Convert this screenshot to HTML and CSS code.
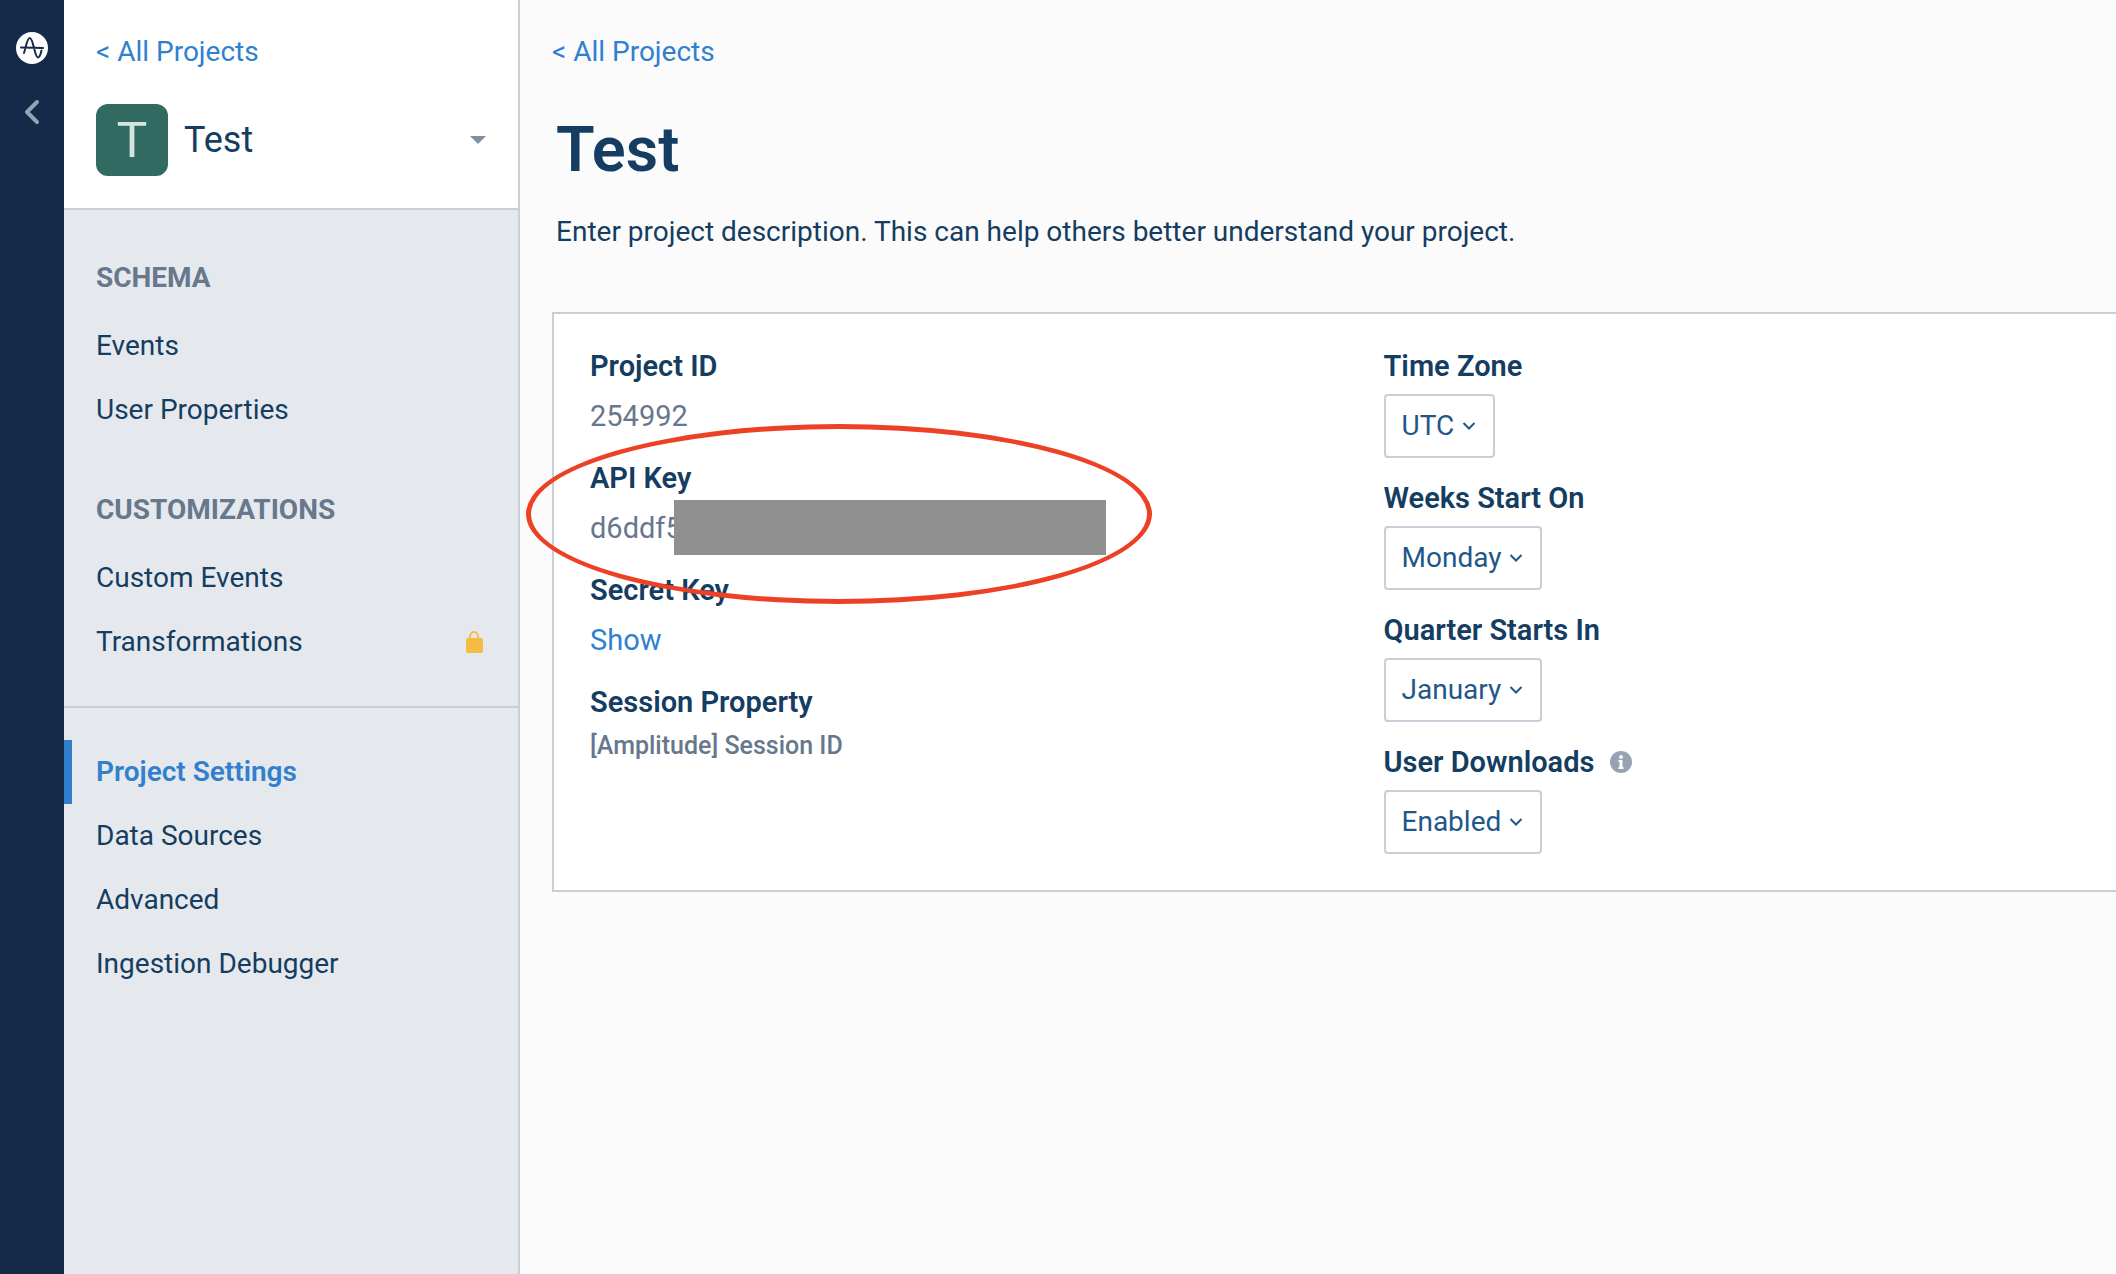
FILE: index.html
```html
<!DOCTYPE html>
<html lang="en">
<head>
<meta charset="utf-8">
<meta name="viewport" content="width=device-width, initial-scale=1">
<title>Test - Project Settings</title>
<link rel="stylesheet" href="styles.css">
</head>
<body>
<div class="app">
  <nav class="rail" aria-label="Global">
    <a class="rail-logo" href="#" aria-label="Home">
      <svg width="32" height="32" viewBox="0 0 32 32" fill="none">
        <circle cx="16" cy="16" r="16" fill="#fff"/>
        <path d="M5 15.500L27 16M8 21C9.500 17 11 6 13.700 6C17.500 6 18.500 25.500 22 25.500C24 25.500 24.500 22 25.500 18.500" stroke="#152a49" stroke-width="2" stroke-linecap="round"/>
      </svg>
    </a>
    <button class="rail-toggle" type="button" aria-label="Collapse menu">
      <svg width="16" height="26" viewBox="0 0 16 26" fill="none">
        <path d="M13 3L3 13L13 23" stroke="#97a3b4" stroke-width="4" stroke-linecap="round" stroke-linejoin="round"/>
      </svg>
    </button>
  </nav>

  <aside class="sidebar">
    <header class="sidebar-head">
      <a class="back-link" href="#">&lt; All Projects</a>
      <button class="project-switch" type="button">
        <span class="avatar">T</span>
        <span class="project-name">Test</span>
        <svg class="caret" width="16" height="8" viewBox="0 0 16 8"><path d="M0 0H16L8 8Z" fill="#7f90a3"/></svg>
      </button>
    </header>
    <nav class="menu" aria-label="Project">
      <section class="menu-group">
        <h2 class="menu-title">SCHEMA</h2>
        <a class="menu-item" href="#">Events</a>
        <a class="menu-item" href="#">User Properties</a>
      </section>
      <section class="menu-group">
        <h2 class="menu-title">CUSTOMIZATIONS</h2>
        <a class="menu-item" href="#">Custom Events</a>
        <a class="menu-item" href="#">Transformations
          <svg width="20" height="22" viewBox="0 0 20 22" fill="none">
            <rect x="0" y="7" width="17" height="15" rx="2" fill="#f6bc42"/>
            <path d="M4 8V5.500A4 4.500 0 0 1 12 5.500V8" stroke="#f6bc42" stroke-width="2"/>
          </svg>
        </a>
      </section>
      <section class="menu-group menu-group-settings">
        <a class="menu-item is-active" href="#" aria-current="page">Project Settings</a>
        <a class="menu-item" href="#">Data Sources</a>
        <a class="menu-item" href="#">Advanced</a>
        <a class="menu-item" href="#">Ingestion Debugger</a>
      </section>
    </nav>
  </aside>

  <main class="content">
    <a class="back-link" href="#">&lt; All Projects</a>
    <h1 class="title">Test</h1>
    <p class="description">Enter project description. This can help others better understand your project.</p>

    <section class="card">
      <dl class="details">
        <div class="detail">
          <dt class="label">Project ID</dt>
          <dd class="value">254992</dd>
        </div>
        <div class="detail">
          <dt class="label">API Key</dt>
          <dd class="value">d6ddf5</dd>
          <dd class="redaction"></dd>
          <dd class="callout"></dd>
        </div>
        <div class="detail">
          <dt class="label">Secret Key</dt>
          <dd class="value"><a class="show-link" href="#">Show</a></dd>
        </div>
        <div class="detail detail-compact">
          <dt class="label">Session Property</dt>
          <dd class="value">[Amplitude] Session ID</dd>
        </div>
      </dl>

      <form class="settings">
        <div class="setting">
          <label class="label" for="time-zone">Time Zone</label>
          <select class="select" id="time-zone"><option>UTC</option></select>
        </div>
        <div class="setting">
          <label class="label" for="week-start">Weeks Start On</label>
          <select class="select" id="week-start"><option>Monday</option></select>
        </div>
        <div class="setting">
          <label class="label" for="quarter-start">Quarter Starts In</label>
          <select class="select" id="quarter-start"><option>January</option></select>
        </div>
        <div class="setting">
          <div class="label-row">
            <label class="label" for="downloads">User Downloads</label>
            <svg width="22" height="22" viewBox="0 0 22 22" role="img" aria-label="Information">
              <circle cx="11" cy="11" r="11" fill="#97a3b4"/>
              <circle cx="11" cy="6" r="2" fill="#fff"/>
              <path d="M8.500 9H12.500V16H13.500V18H8.500V16H9.500V11H8.500Z" fill="#fff"/>
            </svg>
          </div>
          <select class="select" id="downloads"><option>Enabled</option></select>
        </div>
      </form>
    </section>
  </main>
</div>
</body>
</html>
```
FILE: styles.css
```css
* {
  box-sizing: border-box;
}

body {
  margin: 0;
  background: #fbfbfb;
  color: #143d61;
  font-family: Roboto, "Liberation Sans", sans-serif;
  font-size: 28px;
  line-height: 32px;
}

h1, h2, p, dl, dd {
  margin: 0;
}

a {
  color: inherit;
  text-decoration: none;
}

button, select {
  margin: 0;
  color: inherit;
  font: inherit;
}

svg {
  display: block;
  flex: none;
}

.app {
  display: flex;
  min-height: 100vh;
  overflow-x: hidden;
}

/* Global rail */
.rail {
  display: flex;
  flex: none;
  flex-direction: column;
  align-items: center;
  gap: 35px;
  width: 64px;
  padding-top: 32px;
  background: #152a49;
}

.rail-toggle {
  padding: 0;
  border: 0;
  background: none;
}

/* Project sidebar */
.sidebar {
  flex: none;
  width: 456px;
  border-right: 2px solid #c7d0d9;
  background: #e5e9ee;
}

.sidebar-head {
  padding: 36px 32px 32px;
  border-bottom: 2px solid #c7d0d9;
  background: #fff;
}

.back-link {
  display: block;
  color: #2f80cf;
}

.project-switch {
  display: flex;
  align-items: center;
  gap: 16px;
  width: 100%;
  margin-top: 36px;
  padding: 0;
  border: 0;
  background: none;
}

.avatar {
  display: grid;
  place-items: center;
  width: 72px;
  height: 72px;
  border-radius: 12px;
  background: #306a60;
  color: #d4e4e0;
  font-family: "Liberation Sans", sans-serif;
  font-size: 50px;
}

.project-name {
  font-size: 36px;
}

.caret {
  margin-left: auto;
}

.menu {
  padding: 32px 0;
}

.menu-group + .menu-group {
  margin-top: 32px;
}

.menu-title {
  padding: 20px 32px;
  color: #67778c;
  font-size: 28px;
  font-weight: 700;
}

.menu-item {
  display: flex;
  align-items: center;
  justify-content: space-between;
  height: 64px;
  padding: 0 32px;
}

.menu-item.is-active {
  padding-left: 24px;
  border-left: 8px solid #3280cd;
  color: #3280cd;
  font-weight: 600;
}

.menu-group-settings {
  padding-top: 32px;
  border-top: 2px solid #c7d0d9;
}

/* Project page */
.content {
  flex: 1;
  min-width: 0;
  padding: 36px 0 36px 32px;
}

.title {
  margin-top: 46px;
  padding-left: 4px;
  font-size: 63px;
  font-weight: 600;
  line-height: 72px;
}

.description {
  margin-top: 30px;
  padding-left: 4px;
}

.card {
  display: grid;
  grid-template-columns: 52fr 48fr;
  margin-top: 64px;
  padding: 36px 0 36px 36px;
  border: 2px solid #c7d0d9;
  border-right: 0;
  background: #fff;
}

.label {
  font-size: 29px;
  font-weight: 600;
}

.details {
  display: flex;
  flex-direction: column;
  gap: 30px;
}

.detail {
  display: flex;
  flex-direction: column;
  gap: 18px;
  position: relative;
}

.value {
  color: #67778c;
  font-size: 29px;
}

.show-link {
  color: #2f80cf;
}

.detail-compact {
  gap: 12px;
}

.detail-compact .value {
  font-size: 25px;
  font-weight: 500;
}

/* Markup drawn over the API key */
.redaction {
  position: absolute;
  top: 38px;
  left: 84px;
  width: 432px;
  height: 55px;
  background: #909090;
}

.callout {
  position: absolute;
  z-index: 1;
  top: -38px;
  left: -64px;
  width: 626px;
  height: 180px;
  border: 5px solid #ec4124;
  border-radius: 50%;
}

.settings {
  display: flex;
  flex-direction: column;
  gap: 24px;
}

.setting {
  display: flex;
  flex-direction: column;
  align-items: flex-start;
  gap: 12px;
}

.label-row {
  display: flex;
  align-items: center;
  gap: 16px;
}

.select {
  height: 64px;
  padding: 0 38px 0 16px;
  border: 2px solid #c7d0d9;
  border-radius: 4px;
  appearance: none;
  background: #fff url("data:image/svg+xml,%3Csvg xmlns='http://www.w3.org/2000/svg' width='14' height='8' viewBox='0 0 14 8'%3E%3Cpath d='M1.500 1L7 6.500L12.500 1' fill='none' stroke='%231f5789' stroke-width='2'/%3E%3C/svg%3E") no-repeat right 17px center;
  color: #1f5789;
}
```
